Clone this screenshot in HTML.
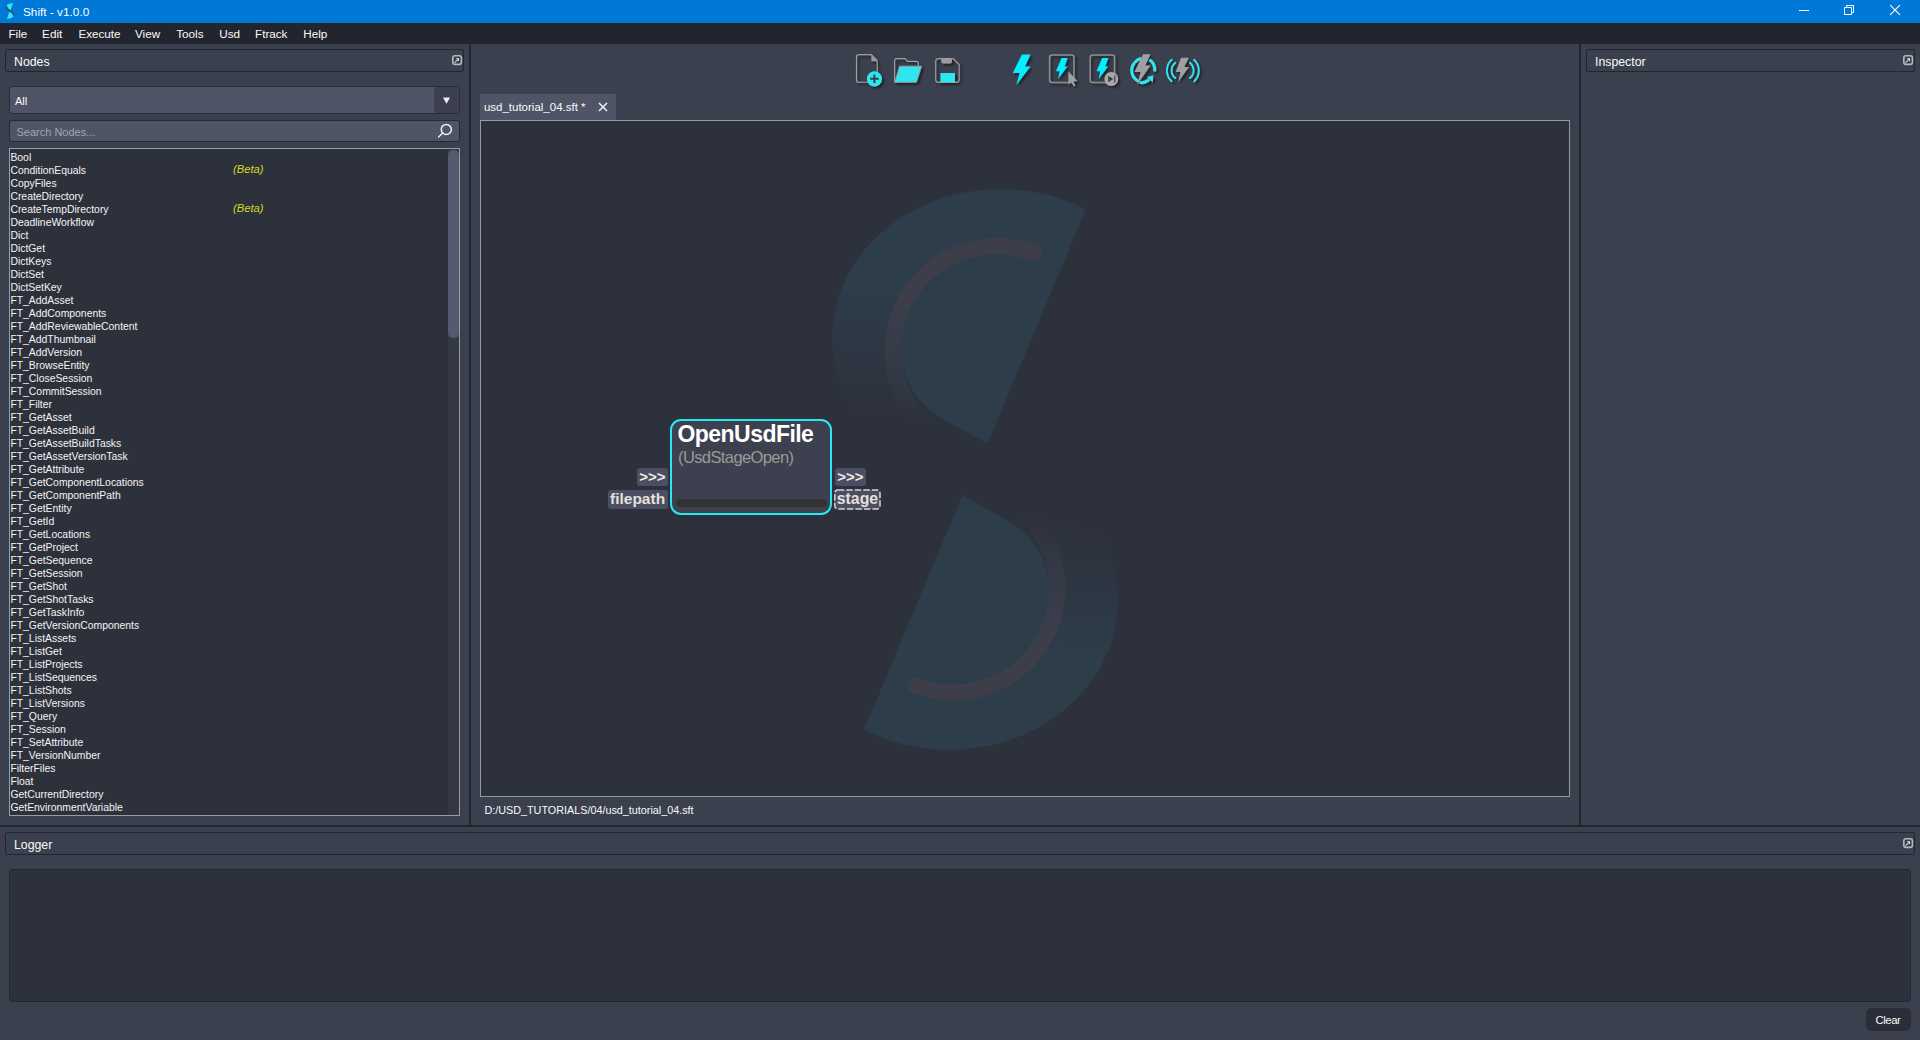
<!DOCTYPE html>
<html><head><meta charset="utf-8">
<style>
*{margin:0;padding:0;box-sizing:border-box}
html,body{width:1920px;height:1040px;overflow:hidden;background:#3b404e;font-family:"Liberation Sans",sans-serif;color:#fafafa}
.a{position:absolute}
.t{position:absolute;white-space:nowrap;line-height:1}
#title{left:0;top:0;width:1920px;height:23px;background:#0078d7}
#menu{left:0;top:23px;width:1920px;height:21px;background:#22252e}
.hdr{position:absolute;height:23px;border:1px solid #23262f;border-radius:2px;background:#3b404e}
.flt{position:absolute;width:10px;height:10px;border:1.3px solid #b5b7bd;border-radius:2px}
.flt::after{content:"";position:absolute;left:2px;top:2px;width:4px;height:4px;border-top:1.2px solid #d0d0d0;border-right:1.2px solid #d0d0d0}
.flt::before{content:"";position:absolute;left:1.6px;top:4.2px;width:5.5px;height:1.2px;background:#d0d0d0;transform:rotate(-45deg)}
.vsplit{position:absolute;width:2px;background:#22252e}
.li{position:absolute;left:11px;font-size:10.4px;line-height:13px;color:#f4f4f4;white-space:nowrap}
.beta{position:absolute;left:233px;font-size:11.2px;font-style:italic;color:#d9d91e;line-height:13px}
</style></head><body>
<!-- title bar -->
<div id="title" class="a">
  <div class="t" style="left:23px;top:6.9px;font-size:11.8px;color:#fff">Shift - v1.0.0</div>
  <svg class="a" style="left:4px;top:2px" width="12" height="19" viewBox="4 2 12 19">
   <path d="M12.9 2.9 L10.7 10.3 Q7.2 9 6.4 6.6 Q6.6 3.3 12.9 2.9 Z" fill="#2ae8f2"/>
   <path d="M6.9 18.9 L9.2 11.7 Q12.8 13 13.7 15.3 Q13.4 18.7 6.9 18.9 Z" fill="#2ae8f2"/>
   <path d="M6.4 6 Q6.6 9.2 10 10.9 Q13.4 12.6 13.7 15.8" fill="none" stroke="#34434e" stroke-width="1.4" stroke-opacity="0.85"/>
  </svg>
  <svg class="a" style="left:1790px;top:0" width="130" height="23" viewBox="1790 0 130 23">
   <path d="M1799 10.5 H1809" stroke="#fff" stroke-width="1"/>
   <path d="M1844.5 7.5 H1851.5 V14.5 H1844.5 Z M1846.5 7.5 V5.5 H1853.5 V12.5 H1851.5" fill="none" stroke="#fff" stroke-width="1"/>
   <path d="M1890.2 5.2 L1899.9 14.9 M1899.9 5.2 L1890.2 14.9" stroke="#fff" stroke-width="1.1"/>
  </svg>

</div>
<div id="menu" class="a">
  <div class="t" style="left:8.4px;top:4.7px;font-size:11.7px">File</div>
  <div class="t" style="left:42.1px;top:4.7px;font-size:11.7px">Edit</div>
  <div class="t" style="left:78.4px;top:4.7px;font-size:11.7px">Execute</div>
  <div class="t" style="left:135px;top:4.7px;font-size:11.7px">View</div>
  <div class="t" style="left:176.2px;top:4.7px;font-size:11.7px">Tools</div>
  <div class="t" style="left:219.2px;top:4.7px;font-size:11.7px">Usd</div>
  <div class="t" style="left:255px;top:4.7px;font-size:11.7px">Ftrack</div>
  <div class="t" style="left:303.2px;top:4.7px;font-size:11.7px">Help</div>
</div>

<!-- splitters -->
<div class="vsplit" style="left:469px;top:44px;height:783px"></div>
<div class="vsplit" style="left:1579px;top:44px;height:783px"></div>
<div class="a" style="left:0;top:825px;width:1920px;height:2px;background:#22252e"></div>

<!-- Nodes dock -->
<div class="hdr" style="left:5px;top:49px;width:459px"></div>
<div class="t" style="left:14px;top:55.6px;font-size:12.3px">Nodes</div>
<svg class="a" style="left:451px;top:54px" width="12" height="12" viewBox="-1 -1 12 12"><rect x="0.8" y="0.8" width="8.6" height="8.6" rx="2.2" fill="none" stroke="#b4b7bf" stroke-width="1.6"/><path d="M3.9 3.3 H7 V6.4 Z" fill="#e6e6e6"/><path d="M2.9 7.3 L5.4 4.8" stroke="#d0d0d0" stroke-width="1.1" stroke-linecap="round"/></svg>


<!-- combo -->
<div class="a" style="left:9px;top:86px;width:451px;height:28px;background:#4f5466;border:1px solid #2a2d36;border-radius:3px"></div>
<div class="a" style="left:434px;top:87px;width:25px;height:26px;background:#3c404e;border-radius:3px"></div>
<div class="t" style="left:15px;top:96px;font-size:11px">All</div>
<svg class="a" style="left:440px;top:95px" width="12" height="12" viewBox="0 0 12 12"><path d="M3 2.5 L10 2.5 L6.5 8.8 Z" fill="#f0f0f0"/></svg>
<!-- search -->
<div class="a" style="left:9px;top:120px;width:451px;height:22px;background:#4f5466;border:1px solid #262931;border-radius:3px"></div>
<div class="t" style="left:16.5px;top:126.6px;font-size:11px;color:#a3a6ad">Search Nodes...</div>
<svg class="a" style="left:436px;top:121px" width="18" height="18" viewBox="0 0 18 18"><circle cx="10.3" cy="8.4" r="5" fill="none" stroke="#f0f0f0" stroke-width="1.5"/><path d="M6.7 12 L2.6 16" stroke="#f0f0f0" stroke-width="1.5" stroke-linecap="round"/></svg>
<!-- list -->
<div class="a" style="left:9px;top:148px;width:451px;height:668px;background:#2d313c;border:1px solid #9a9ca4"></div>
<div class="a" style="left:448px;top:149px;width:11px;height:666px;background:#343744"></div>
<div class="a" style="left:448px;top:150px;width:10.5px;height:188px;background:#545a6e;border-radius:5px"></div>
<div class="a" id="list" style="left:10.4px;top:151px;font-size:10.4px;line-height:13px;color:#f4f4f4;white-space:nowrap">
<div>Bool</div>
<div>ConditionEquals</div>
<div>CopyFiles</div>
<div>CreateDirectory</div>
<div>CreateTempDirectory</div>
<div>DeadlineWorkflow</div>
<div>Dict</div>
<div>DictGet</div>
<div>DictKeys</div>
<div>DictSet</div>
<div>DictSetKey</div>
<div>FT_AddAsset</div>
<div>FT_AddComponents</div>
<div>FT_AddReviewableContent</div>
<div>FT_AddThumbnail</div>
<div>FT_AddVersion</div>
<div>FT_BrowseEntity</div>
<div>FT_CloseSession</div>
<div>FT_CommitSession</div>
<div>FT_Filter</div>
<div>FT_GetAsset</div>
<div>FT_GetAssetBuild</div>
<div>FT_GetAssetBuildTasks</div>
<div>FT_GetAssetVersionTask</div>
<div>FT_GetAttribute</div>
<div>FT_GetComponentLocations</div>
<div>FT_GetComponentPath</div>
<div>FT_GetEntity</div>
<div>FT_GetId</div>
<div>FT_GetLocations</div>
<div>FT_GetProject</div>
<div>FT_GetSequence</div>
<div>FT_GetSession</div>
<div>FT_GetShot</div>
<div>FT_GetShotTasks</div>
<div>FT_GetTaskInfo</div>
<div>FT_GetVersionComponents</div>
<div>FT_ListAssets</div>
<div>FT_ListGet</div>
<div>FT_ListProjects</div>
<div>FT_ListSequences</div>
<div>FT_ListShots</div>
<div>FT_ListVersions</div>
<div>FT_Query</div>
<div>FT_Session</div>
<div>FT_SetAttribute</div>
<div>FT_VersionNumber</div>
<div>FilterFiles</div>
<div>Float</div>
<div>GetCurrentDirectory</div>
<div>GetEnvironmentVariable</div>
</div>
<div class="beta" style="top:162.8px">(Beta)</div>
<div class="beta" style="top:201.8px">(Beta)</div>

<!-- central -->
<div class="a" style="left:480px;top:120px;width:1090px;height:677px;background:#2d313c;border:1px solid #9599a2"></div>
<div class="a" style="left:480px;top:94px;width:136px;height:26px;background:#4f5466"></div>
<div class="t" style="left:483.9px;top:101.8px;font-size:11.5px">usd_tutorial_04.sft *</div>

<!-- logo watermark -->
<svg class="a" style="left:481px;top:121px" width="1088" height="675" viewBox="481 121 1088 675">
 <defs>
  <linearGradient id="gout" x1="0" y1="290" x2="0" y2="420" gradientUnits="userSpaceOnUse">
   <stop offset="0" stop-color="#2d3d4a" stop-opacity="1"/><stop offset="1" stop-color="#2d3d4a" stop-opacity="0"/>
  </linearGradient>
  <linearGradient id="garc" x1="0" y1="300" x2="0" y2="425" gradientUnits="userSpaceOnUse">
   <stop offset="0" stop-color="#3d3e4a" stop-opacity="1"/><stop offset="1" stop-color="#3d3e4a" stop-opacity="0"/>
  </linearGradient>
  <clipPath id="cut"><path d="M1085.9 209.1 L987.5 443.5 L700 443.5 L700 100 L1150 100 Z"/></clipPath>
 </defs>
 <g>
   <g clip-path="url(#cut)">
    <ellipse cx="1002.8" cy="339.6" rx="170.5" ry="150.5" transform="rotate(3 1002.8 339.6)" fill="url(#gout)"/>
    <path d="M987.5 443.5 L949.2 422.3 C938.7 416.4 926.3 408.3 918.9 398.9 A88.4 88.4 0 1 1 1076.9 344.2 L1076.9 460 L987.5 460 Z" fill="#2d3d4a"/>
   </g>
   <path d="M1033.8 253 A104 104 0 0 0 923.2 423.7" fill="none" stroke="url(#garc)" stroke-width="16" stroke-linecap="round"/>
 </g>
 <g transform="rotate(180 975 469.4)">
   <g clip-path="url(#cut)">
    <ellipse cx="1002.8" cy="339.6" rx="170.5" ry="150.5" transform="rotate(3 1002.8 339.6)" fill="url(#gout)"/>
    <path d="M987.5 443.5 L949.2 422.3 C938.7 416.4 926.3 408.3 918.9 398.9 A88.4 88.4 0 1 1 1076.9 344.2 L1076.9 460 L987.5 460 Z" fill="#2d3d4a"/>
   </g>
   <path d="M1033.8 253 A104 104 0 0 0 923.2 423.7" fill="none" stroke="url(#garc)" stroke-width="16" stroke-linecap="round"/>
 </g>
</svg>
<!-- node -->
<div class="a" style="left:670px;top:418.5px;width:162px;height:96px;border:2.4px solid #29e8f4;border-radius:11px;background:#3c404f"></div>
<div class="t" style="left:677.5px;top:422.6px;font-size:23px;letter-spacing:-0.55px;font-weight:bold;color:#fff">OpenUsdFile</div>
<div class="t" style="left:678px;top:449.2px;font-size:16.5px;letter-spacing:-0.6px;color:#9c9a96">(UsdStageOpen)</div>
<div class="a" style="left:676px;top:499px;width:150.5px;height:8px;background:#323232;border-radius:4px"></div>
<div class="a" style="left:637px;top:468px;width:30.5px;height:18.2px;background:#4d4e63;border-radius:3px"></div>
<div class="t" style="left:639.3px;top:468.6px;font-size:15px;font-weight:bold;color:#ecebe6">&gt;&gt;&gt;</div>
<div class="a" style="left:608px;top:490.2px;width:59.5px;height:18.5px;background:#4d4e63;border-radius:3px"></div>
<div class="t" style="left:610px;top:490.6px;font-size:15.5px;font-weight:bold;color:#e3e1da">filepath</div>
<div class="a" style="left:835px;top:468px;width:30.5px;height:18.2px;background:#4d4e63;border-radius:3px"></div>
<div class="t" style="left:837.3px;top:468.6px;font-size:15px;font-weight:bold;color:#ecebe6">&gt;&gt;&gt;</div>
<svg class="a" style="left:833px;top:488px" width="50" height="24" viewBox="833 488 50 24"><rect x="834.8" y="490" width="45.2" height="19" rx="3" fill="#4d4e63" stroke="#d6d6d6" stroke-width="1.5" stroke-dasharray="6.5 2"/></svg>
<div class="t" style="left:836.8px;top:490.6px;font-size:15.8px;font-weight:bold;color:#e3e1da">stage</div>

<div class="t" style="left:484.4px;top:805px;font-size:10.8px">D:/USD_TUTORIALS/04/usd_tutorial_04.sft</div>


<!-- toolbar -->
<svg class="a" style="left:840px;top:45px" width="380" height="48" viewBox="840 45 380 48">
 <defs>
  <filter id="sh" x="-30%" y="-30%" width="160%" height="160%"><feGaussianBlur in="SourceAlpha" stdDeviation="0.8"/><feOffset dx="1.6" dy="1.6"/><feComponentTransfer><feFuncA type="linear" slope="0.5"/></feComponentTransfer><feMerge><feMergeNode/><feMergeNode in="SourceGraphic"/></feMerge></filter>
 </defs>
 <g filter="url(#sh)">
  <!-- new file -->
  <path d="M858.6 54.6 H871.2 L877.2 60.6 V79.9 Q877.2 82.2 874.9 82.2 H858.6 Q856.5 82.2 856.5 79.9 V56.9 Q856.5 54.6 858.6 54.6 Z" fill="none" stroke="#9e9e9e" stroke-width="1.15"/>
  <path d="M871.4 55 V61.2 H877 Z" fill="#9b9b9b"/>
  <circle cx="874.4" cy="78.8" r="7.6" fill="#2ee6f0"/>
  <path d="M870.1 78.8 H878.7 M874.4 74.5 V83.1" stroke="#3b404e" stroke-width="2"/>
  <!-- folder -->
  <path d="M918.4 66 V63.4 Q918.4 61.4 916.4 61.4 H907.6 L905.2 58.6 H896.6 Q894.6 58.6 894.6 60.6 V80.3 Q894.6 82.3 896.6 82.3" fill="none" stroke="#9e9e9e" stroke-width="1.15"/>
  <path d="M899.6 66.2 H921.6 L916.4 82.3 H894.8 Z" fill="#2ee6f0" stroke="#9b9b9b" stroke-width="0.9" stroke-linejoin="round"/>
  <!-- save -->
  <path d="M938.6 58.6 H953.2 L959.2 64.6 V79.5 Q959.2 82.4 956.3 82.4 H938.6 Q935.7 82.4 935.7 79.5 V61.5 Q935.7 58.6 938.6 58.6 Z" fill="none" stroke="#9e9e9e" stroke-width="1.15"/>
  <path d="M941.2 58.6 H952 V61.6 Q952 63.5 950 63.5 H943.2 Q941.2 63.5 941.2 61.6 Z" fill="#9b9b9b"/>
  <rect x="940.4" y="73" width="14.6" height="9.2" fill="#2ee6f0"/>
  <!-- bolt -->
  <path d="M1021.9 54.4 H1030.6 L1025 66.6 H1030.6 L1016.3 85 L1019.7 73.1 H1012.8 Z" fill="#00f0ff"/>
  <!-- box bolt cursor -->
  <rect x="1049.6" y="54.9" width="24.4" height="27.6" rx="2.5" fill="none" stroke="#8e8e8e" stroke-width="1.5"/>
  <path d="M1061.6 58.1 H1067.8 L1064.7 66.6 H1067.5 L1058.1 79 L1059.7 71.3 H1055.9 Z" fill="#00f0ff"/>
  <path d="M1068.4 71.3 V84.6 L1071.4 81.8 L1073.6 86.4 L1075.4 85.6 L1073.2 81.2 H1077.5 Z" fill="#a0a0a0"/>
  <!-- box bolt play -->
  <rect x="1090.2" y="54.9" width="24.4" height="27.6" rx="2.5" fill="none" stroke="#8e8e8e" stroke-width="1.5"/>
  <path d="M1102.2 58.1 H1108.4 L1105.3 66.6 H1108.1 L1098.7 79 L1100.3 71.3 H1096.5 Z" fill="#00f0ff"/>
  <circle cx="1111.3" cy="79" r="6.9" fill="#a8a8a8"/>
  <path d="M1108.2 75.8 V82.2 L1113.4 79 Z M1114.2 75.6 H1115.4 V82.4 H1114.2 Z" fill="#3b404e"/>
  <!-- refresh bolt -->
  <path d="M1134.4 63 A12 12 0 0 0 1139 81.6" fill="none" stroke="#2ee6f0" stroke-width="3"/>
  <path d="M1141 58.3 A12 12 0 0 0 1134.4 63" fill="none" stroke="#2ee6f0" stroke-width="3"/>
  <path d="M1149.5 59.8 A12 12 0 0 1 1154.6 71.6" fill="none" stroke="#2ee6f0" stroke-width="3"/>
  <path d="M1139.6 82.4 Q1145 83.6 1149.4 79.4" fill="none" stroke="#2ee6f0" stroke-width="3"/>
  <path d="M1147.2 77 L1153.3 75.2 L1152.8 82.4 Z" fill="#2ee6f0"/>
  <path d="M1143 54.2 H1150.5 L1145.3 65.5 H1150.5 L1137.3 84.7 L1140.6 72 H1134.5 Z" fill="#a0a0a0"/>
  <!-- broadcast bolt -->
  <path d="M1171.6 59.8 A14.75 14.75 0 0 0 1171.6 81.4 M1175.3 62.7 A9.9 9.9 0 0 0 1175.3 78.1 M1189.9 62.7 A9.9 9.9 0 0 1 1189.9 78.1 M1194.1 59.8 A14.75 14.75 0 0 1 1194.1 81.4" fill="none" stroke="#2ee6f0" stroke-width="1.9" stroke-linecap="round"/>
  <path d="M1181 57.7 H1188.9 L1184.2 66.9 H1188.9 L1178.1 82.3 L1180.5 72 H1175.8 Z" fill="#a0a0a0"/>
 </g>
</svg>
<!-- tab close -->
<svg class="a" style="left:597px;top:101px" width="12" height="12" viewBox="0 0 12 12"><path d="M2 2 L10 10 M10 2 L2 10" stroke="#f0f0f0" stroke-width="1.6"/></svg>

<!-- inspector -->
<div class="hdr" style="left:1586px;top:49px;width:329px"></div>
<div class="t" style="left:1595px;top:55.6px;font-size:12.3px">Inspector</div>
<svg class="a" style="left:1902px;top:54px" width="12" height="12" viewBox="-1 -1 12 12"><rect x="0.8" y="0.8" width="8.6" height="8.6" rx="2.2" fill="none" stroke="#b4b7bf" stroke-width="1.6"/><path d="M3.9 3.3 H7 V6.4 Z" fill="#e6e6e6"/><path d="M2.9 7.3 L5.4 4.8" stroke="#d0d0d0" stroke-width="1.1" stroke-linecap="round"/></svg>

<!-- logger -->
<div class="hdr" style="left:5px;top:832px;width:1910px"></div>
<div class="t" style="left:14px;top:839.4px;font-size:12.3px">Logger</div>
<svg class="a" style="left:1902px;top:837px" width="12" height="12" viewBox="-1 -1 12 12"><rect x="0.8" y="0.8" width="8.6" height="8.6" rx="2.2" fill="none" stroke="#b4b7bf" stroke-width="1.6"/><path d="M3.9 3.3 H7 V6.4 Z" fill="#e6e6e6"/><path d="M2.9 7.3 L5.4 4.8" stroke="#d0d0d0" stroke-width="1.1" stroke-linecap="round"/></svg>
<div class="a" style="left:9px;top:869px;width:1902px;height:133px;background:#2d313c;border:1px solid #24272f;border-radius:4px"></div>
<div class="a" style="left:1866px;top:1008px;width:45px;height:23px;background:#2b2e38;border-radius:5px"></div>
<div class="t" style="left:1875.6px;top:1014.8px;font-size:11.3px;letter-spacing:-0.45px">Clear</div>
</body></html>
